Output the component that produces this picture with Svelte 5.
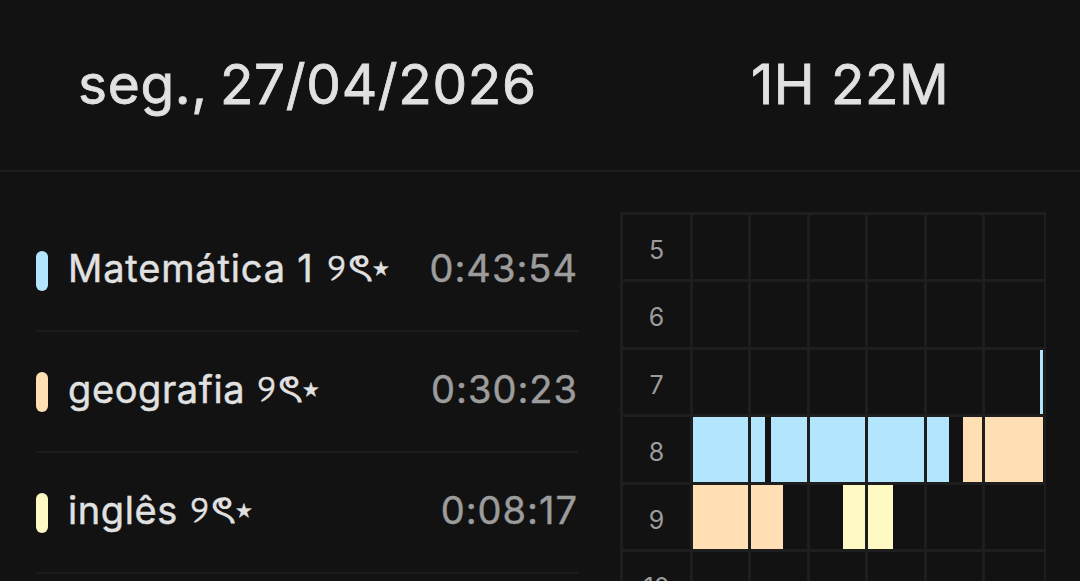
<script>
  const blue = '#b3e5fc';
  const peach = '#ffdfb3';
  const yellow = '#fff9c4';

  const subjects = [
    { name: 'Matemática 1', time: '0:43:54', color: blue, tracking: 0.83, gap: 13 },
    { name: 'geografia', time: '0:30:23', color: peach, tracking: 0.6, gap: 11.5 },
    { name: 'inglês', time: '0:08:17', color: yellow, tracking: 0.6, gap: 12 }
  ];

  const empty = [[], [], [], [], [], []];
  // each cell lists its fills as [leading gap, width, colour]
  const hours = [
    { label: '5', cells: empty },
    { label: '6', cells: empty },
    { label: '7', cells: [[], [], [], [], [], [[55.5, 2.5, blue]]] },
    {
      label: '8',
      cells: [
        [[0, 56, blue]],
        [[0, 13.6, blue], [6.2, 35.7, blue]],
        [[0, 56, blue]],
        [[0, 56, blue]],
        [[0, 22.6, blue], [13.6, 19.2, peach]],
        [[0, 58, peach]]
      ]
    },
    {
      label: '9',
      cells: [[[0, 56, peach]], [[0, 31.6, peach]], [[33, 22.5, yellow]], [[0, 24.5, yellow]], [], []]
    },
    { label: '10', cells: empty }
  ];
</script>

<div class="page">
  <header>
    <div class="date">seg., 27/04/2026</div>
    <div class="total">1H 22M</div>
  </header>
  <main>
    <ul>
      {#each subjects as s}
        <li>
          <i class="bar" style="background:{s.color}"></i>
          <span class="name" style="letter-spacing:{s.tracking}px;margin-right:{s.gap}px">{s.name}</span>
          <span class="orn"><span class="two">୨</span><span class="ta">ৎ</span><span class="star">⋆</span></span>
          <span class="time">{s.time}</span>
        </li>
      {/each}
    </ul>
    <div class="table">
      {#each hours as h}
        <div class="row">
          <div class="label">{h.label}</div>
          {#each h.cells as cell}
            <div class="cell">
              {#each cell as [gap, width, color]}
                <i style="margin-left:{gap}px;width:{width}px;background:{color}"></i>
              {/each}
            </div>
          {/each}
        </div>
      {/each}
    </div>
  </main>
</div>

<style>
  :global(body) { background: #121212; }
  .page {
    width: 1080px; height: 581px; overflow: hidden; background: #121212;
    color: #e1e1e1; font-family: Inter, "Liberation Sans", sans-serif;
  }
  header {
    display: flex; box-sizing: border-box; height: 172px; padding-top: 50px;
    border-bottom: 2px solid #1e1e1e; font-size: 55px; line-height: 68px; white-space: nowrap;
    letter-spacing: 0.45px; -webkit-text-stroke: 0.8px currentColor;
  }
  .date { width: 673px; padding-left: 78px; box-sizing: border-box; word-spacing: -4px; letter-spacing: 0.65px; }
  .total { padding-left: 78px; }
  main { display: flex; padding-top: 40px; }
  ul { list-style: none; margin: -1px 0 0 36px; padding: 0; width: 542px; flex: none; }
  li {
    display: flex; align-items: center; box-sizing: border-box; height: 121px;
    border-bottom: 2px solid #1c1c1c; font-size: 38px; white-space: nowrap;
    -webkit-text-stroke: 0.45px currentColor;
  }
  .bar { width: 12px; height: 40px; border-radius: 6px; margin-right: 20px; flex: none; }
  .name, .time { padding-bottom: 5px; }
  .orn { padding-bottom: 2px; }
  .two { margin-right: 4px; }
  .ta { display: inline-block; transform: scaleX(1.22); -webkit-text-stroke: 0.9px currentColor; }
  .star { margin-left: -1px; }
  .time { margin-left: auto; color: #9c9c9c; letter-spacing: 1px; margin-right: 0; }
  .table { margin-left: 42px; width: 426px; flex: none; box-sizing: border-box; border: 3px solid #1e1e1e; border-width: 3px 2px 0 3px; }
  .row { display: flex; height: 67.45px; box-sizing: border-box; border-bottom: 3px solid #1e1e1e; }
  .label { width: 67px; text-align: center; color: #9c9c9c; font-size: 25px; line-height: 70px; }
  .cell { width: 58.4px; flex: none; box-sizing: border-box; border-left: 3px solid #1e1e1e; display: flex; }
  .cell:last-child { width: 61px; }
  .cell i { flex: none; }
</style>
